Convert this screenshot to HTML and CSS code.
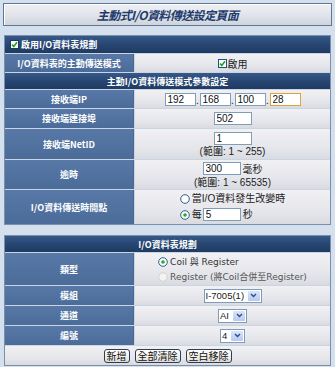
FILE: index.html
```html
<!DOCTYPE html>
<html>
<head>
<meta charset="utf-8">
<link rel="stylesheet" href="styles.css">
</head>
<body>
<div class="title">主動式I/O資料傳送設定頁面</div>

<div class="tbl t1">
  <div class="hd hd-left span"><svg class="cb cb-hd" viewBox="0 0 9 9"><rect x="0.5" y="0.5" width="8" height="8" fill="#fff" stroke="#1c3a5e"/><path d="M2 4.5 L3.8 6.5 L7 2.3" fill="none" stroke="#21a121" stroke-width="1.6"/></svg>啟用I/O資料表規劃</div>

  <div class="lb">I/O資料表的主動傳送模式</div>
  <div class="vl"><svg class="cb" viewBox="0 0 9 9"><rect x="0.5" y="0.5" width="8" height="8" fill="#fff" stroke="#1c4f82"/><path d="M2 4.5 L3.8 6.5 L7 2.3" fill="none" stroke="#21a121" stroke-width="1.6"/></svg>啟用</div>

  <div class="hd span">主動I/O資料傳送模式參數設定</div>

  <div class="lb">接收端IP</div>
  <div class="vl"><span class="ipgrp"><input class="in ip" value="192"><span class="dot">.</span><input class="in ip" value="168"><span class="dot">.</span><input class="in ip" value="100"><span class="dot">.</span><input class="in ip focus" value="28"></span></div>

  <div class="lb">接收端連接埠</div>
  <div class="vl"><input class="in w38" value="502"></div>

  <div class="lb">接收端NetID</div>
  <div class="vl col"><input class="in w38" value="1"><span class="note">(範圍: 1 ~ 255)</span></div>

  <div class="lb">逾時</div>
  <div class="vl col"><span class="line"><input class="in w38" value="300"><span class="unit">毫秒</span></span><span class="note">(範圍: 1 ~ 65535)</span></div>

  <div class="lb">I/O資料傳送時間點</div>
  <div class="vl"><span class="opts">
    <span class="opt"><svg class="rd" viewBox="0 0 10 10"><circle cx="5" cy="5" r="4.3" fill="#fff" stroke="#2f5c8c"/></svg>當I/O資料發生改變時</span>
    <span class="opt"><svg class="rd" viewBox="0 0 10 10"><circle cx="5" cy="5" r="4.3" fill="#fff" stroke="#2f5c8c"/><circle cx="5" cy="5" r="1.8" fill="#2aa82a"/></svg>每<input class="in w38" value="5"><span class="unit">秒</span></span>
  </span></div>
</div>

<div class="tbl t2">
  <div class="hd span">I/O資料表規劃</div>

  <div class="lb">類型</div>
  <div class="vl"><span class="opts">
    <span class="opt lat"><svg class="rd" viewBox="0 0 10 10"><circle cx="5" cy="5" r="4.3" fill="#fff" stroke="#2f5c8c"/><circle cx="5" cy="5" r="1.8" fill="#2aa82a"/></svg>Coil 與 Register</span>
    <span class="opt lat dis"><svg class="rd" viewBox="0 0 10 10"><circle cx="5" cy="5" r="4.3" fill="#f2f2f2" stroke="#d2d2d2"/></svg>Register (將Coil合併至Register)</span>
  </span></div>

  <div class="lb">模組</div>
  <div class="vl"><span class="sel w56"><span class="st">I-7005(1)</span><span class="arr"><svg viewBox="0 0 7 5"><path d="M1 1 L3.5 3.5 L6 1" fill="none" stroke="#2b4d8c" stroke-width="1.4"/></svg></span></span></div>

  <div class="lb">通道</div>
  <div class="vl"><span class="sel w29"><span class="st">AI</span><span class="arr"><svg viewBox="0 0 7 5"><path d="M1 1 L3.5 3.5 L6 1" fill="none" stroke="#2b4d8c" stroke-width="1.4"/></svg></span></span></div>

  <div class="lb">編號</div>
  <div class="vl"><span class="sel w25"><span class="st">4</span><span class="arr"><svg viewBox="0 0 7 5"><path d="M1 1 L3.5 3.5 L6 1" fill="none" stroke="#2b4d8c" stroke-width="1.4"/></svg></span></span></div>

  <div class="vl span btns"><button class="btn">新增</button><button class="btn">全部清除</button><button class="btn">空白移除</button></div>
</div>
</body>
</html>
```

FILE: styles.css
```css
* { box-sizing: border-box; }
html, body { margin: 0; }
body {
  width: 335px;
  height: 367px;
  padding: 3px;
  background: #d5e0ee;
  font-family: "Liberation Sans", "Noto Sans CJK TC", sans-serif;
  font-size: 10px;
  color: #222;
  overflow: hidden;
}
.title {
  height: 23px;
  border: 1px solid #5f7797;
  background: linear-gradient(#eef0f3, #dfe2e8 60%, #cfd4dc);
  box-shadow: inset 1px 1px 0 #fff;
  text-align: center;
  line-height: 21px;
  font-family: "Noto Sans CJK TC", sans-serif;
  font-size: 12px;
  font-weight: 700;
  font-style: italic;
  color: #1f3c6c;
  letter-spacing: -0.6px;
}
.tbl {
  margin: 0 1px;
  border: 1px solid #7c8ea8;
  background: #c9d5e3;
  display: grid;
  grid-template-columns: 129px 1fr;
  gap: 1px;
}
.t1 {
  margin-top: 9px;
  grid-template-rows: 17px 18px 16px 18px 19px 30px 29px 34px;
}
.t2 {
  margin-top: 10px;
  grid-template-rows: 16px 32px 19px 19px 19px 19px;
}
.span { grid-column: 1 / span 2; }
.hd {
  background: linear-gradient(#36598a, #274672 50%, #1f3b62);
  color: #fff;
  font-family: "Noto Sans CJK TC", sans-serif;
  font-weight: 700;
  font-size: 9px;
  display: flex;
  align-items: center;
  justify-content: center;
}
.hd-left { justify-content: flex-start; padding-left: 5px; }
.lb {
  background: linear-gradient(#5879a7, #4b6b99);
  color: #fff;
  font-family: "Noto Sans CJK TC", sans-serif;
  font-weight: 700;
  font-size: 9px;
  display: flex;
  align-items: center;
  justify-content: center;
  border-right: 1px solid #4a6890;
}
.vl {
  background: linear-gradient(#f1f1f4, #e4e5ea 70%, #d9dbe1);
  display: flex;
  align-items: center;
  justify-content: center;
  font-family: "Liberation Sans", "Noto Sans CJK TC", sans-serif;
  font-size: 10px;
  color: #222;
}
.vl.col { flex-direction: column; gap: 1px; }
.cb { width: 9px; height: 9px; margin-right: 1px; flex: none; }
.cb-hd { margin-right: 2px; }
.in {
  height: 13px;
  border: 1px solid #7f9db9;
  background: #fff;
  font-family: "Liberation Sans", sans-serif;
  font-size: 10px;
  padding: 0 2px;
  color: #111;
  outline: none;
}
.ip { width: 31px; }
.focus { border-color: #e0a23c; }
.w38 { width: 38px; }
.dot { width: 4px; text-align: center; align-self: flex-end; line-height: 10px; }
.ipgrp { display: flex; align-items: center; }
.line { display: flex; align-items: center; }
.unit { margin-left: 2px; }
.note { line-height: 11px; }
.opts { display: flex; flex-direction: column; align-items: flex-start; gap: 3px; }
.opt { display: flex; align-items: center; line-height: 12px; white-space: nowrap; }
.rd { width: 10px; height: 10px; margin-right: 2px; flex: none; }
.opt .in { margin-left: 1px; }
.lat { font-family: "DejaVu Sans", "Noto Sans CJK TC", sans-serif; font-size: 9px; color: #333; }
.dis { color: #555; }
.sel {
  display: inline-flex;
  height: 14px;
  border: 1px solid #7f9db9;
  background: #fff;
  align-items: stretch;
  white-space: nowrap;
}
.st { flex: 1; min-width: 0; padding-left: 1px; line-height: 12px; font-size: 9.5px; overflow: hidden; }
.arr {
  width: 12px;
  flex: none;
  margin: 1px;
  background: linear-gradient(#dbe5fb, #b7c9ef);
  border-radius: 1px;
  display: flex;
  align-items: center;
  justify-content: center;
}
.arr svg { width: 7px; height: 5px; }
.w56 { width: 58px; }
.w29 { width: 29px; }
.w25 { width: 25px; }
.btns { gap: 5px; }
.btn {
  height: 14px;
  padding: 0 2px;
  border: 1px solid #2e3d57;
  border-radius: 3px;
  background: linear-gradient(#ffffff, #ecebe6 70%, #d8d7d0);
  font-family: "Noto Sans CJK TC", sans-serif;
  font-size: 10px;
  line-height: 11px;
  color: #111;
}
```
